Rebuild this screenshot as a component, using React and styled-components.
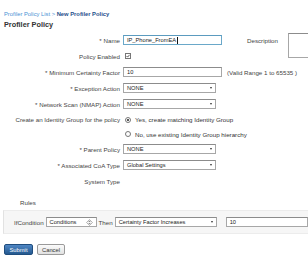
import React from 'react';
import styled, { createGlobalStyle } from 'styled-components';

const GlobalStyle = createGlobalStyle`
  html, body {
    margin: 0;
    padding: 0;
    background: #fff;
    overflow: hidden;
  }
  body {
    font-family: "Liberation Sans", Arial, sans-serif;
    color: #333;
  }
`;

const Page = styled.div`
  width: 308px;
  height: 261px;
  padding: 10px 0 0 4px;
  box-sizing: border-box;
  font-size: 6.2px;
  overflow: hidden;
`;

const Breadcrumb = styled.div`
  font-size: 5.8px;
  line-height: 9px;
  color: #4a8fd4;
`;

const Current = styled.span`
  font-weight: bold;
  color: #1f4f8c;
`;

const Title = styled.div`
  font-size: 7.3px;
  font-weight: bold;
  line-height: 11px;
  color: #333;
`;

const Form = styled.div`
  display: grid;
  grid-template-columns: 116px 1fr;
  grid-template-rows: 16px 16px 16px 16px 16px 15px 14px 16px 16px 16px;
  column-gap: 3px;
  margin-top: 2px;
`;

const Label = styled.div`
  display: flex;
  align-items: center;
  justify-content: flex-end;
  text-align: right;
  white-space: nowrap;
  color: #444;
`;

const Field = styled.div`
  display: flex;
  align-items: center;
  white-space: nowrap;
  position: relative;
`;

const Box = styled.div`
  box-sizing: border-box;
  width: ${p => p.w}px;
  height: 10px;
  display: flex;
  align-items: center;
  padding: 0 3px;
  background: #fff;
  border: 1px solid ${p => (p.focused ? '#6aa8c9' : '#a7a7a7')};
  border-top-color: ${p => (p.focused ? '#5b9bbf' : '#8c8c8c')};
  color: #222;
  font-size: 5.7px;
  white-space: nowrap;
  overflow: hidden;
`;

const Caret = styled.span`
  display: inline-block;
  width: 1px;
  height: 7px;
  background: #111;
  margin-left: 0.5px;
`;

const Arrow = styled.span`
  margin-left: auto;
  width: 0;
  height: 0;
  border-left: 1.5px solid transparent;
  border-right: 1.5px solid transparent;
  border-top: 2px solid #333;
`;

const Aside = styled.span`
  margin-left: ${p => p.gap}px;
  color: #444;
`;

const Description = styled.div`
  position: absolute;
  left: 165px;
  top: 1px;
  width: 40px;
  height: 25px;
  box-sizing: border-box;
  border: 1px solid #a7a7a7;
  border-top-color: #8c8c8c;
  background: #fff;
`;

const Check = styled.span`
  box-sizing: border-box;
  width: 6px;
  height: 6px;
  margin-left: 2px;
  border: 1px solid #777;
  display: flex;
  align-items: center;
  justify-content: center;
  svg { display: block; }
`;

const Radio = styled.span`
  box-sizing: border-box;
  width: 6px;
  height: 6px;
  margin: 0 4px 0 2px;
  border-radius: 50%;
  border: 1px solid #777;
  display: flex;
  align-items: center;
  justify-content: center;
  &::after {
    content: '';
    width: 2px;
    height: 2px;
    border-radius: 50%;
    background: ${p => (p.checked ? '#222' : 'transparent')};
  }
`;

const RulesTitle = styled.div`
  margin: 9px 0 0 16px;
  line-height: 9px;
  color: #444;
`;

const RulesBar = styled.div`
  margin: 3px 0 0 -1px;
  height: 24px;
  box-sizing: border-box;
  display: flex;
  align-items: center;
  gap: 1px;
  padding-left: 9px;
  background: #f6f6f6;
  border-top: 1px solid #ececec;
  border-bottom: 1px solid #ececec;
  border-left: 1px solid #e2e2e2;
  white-space: nowrap;
`;

const RuleText = styled.span`
  color: #444;
  margin: 0 1px;
`;

const Updown = styled.svg`
  margin-left: auto;
  display: block;
`;

const Actions = styled.div`
  display: flex;
  gap: 4px;
  margin-top: 10px;
`;

const Button = styled.div`
  box-sizing: border-box;
  height: 11px;
  width: ${p => p.w}px;
  display: flex;
  align-items: center;
  justify-content: center;
  border-radius: 2px;
  font-size: 5.8px;
`;

const SubmitButton = styled(Button)`
  color: #fff;
  background: linear-gradient(#4f86c4, #24598f);
  border: 1px solid #1f4d7e;
`;

const CancelButton = styled(Button)`
  color: #333;
  background: linear-gradient(#fbfbfb, #e1e1e1);
  border: 1px solid #9a9a9a;
`;

const Select = ({ w, children }) => (
  <Box w={w}>
    {children}
    <Arrow />
  </Box>
);

export default function App() {
  return (
    <>
      <GlobalStyle />
      <Page>
        <Breadcrumb>
          Profiler Policy List &gt; <Current>New Profiler Policy</Current>
        </Breadcrumb>
        <Title>Profiler Policy</Title>
        <Form>
          <Label>* Name</Label>
          <Field>
            <Box w={99} focused>
              IP_Phone_FromEA<Caret />
            </Box>
            <Aside gap={25}>Description</Aside>
            <Description />
          </Field>

          <Label>Policy Enabled</Label>
          <Field>
            <Check>
              <svg width="4" height="4" viewBox="0 0 4 4">
                <path d="M0.5 2 L1.6 3.1 L3.6 0.8" fill="none" stroke="#333" strokeWidth="0.8" />
              </svg>
            </Check>
          </Field>

          <Label>* Minimum Certainty Factor</Label>
          <Field>
            <Box w={99}>10</Box>
            <Aside gap={5}>(Valid Range 1 to 65535 )</Aside>
          </Field>

          <Label>* Exception Action</Label>
          <Field>
            <Select w={93}>NONE</Select>
          </Field>

          <Label>* Network Scan (NMAP) Action</Label>
          <Field>
            <Select w={93}>NONE</Select>
          </Field>

          <Label>Create an Identity Group for the policy</Label>
          <Field>
            <Radio checked />
            Yes, create matching Identity Group
          </Field>

          <Label />
          <Field>
            <Radio />
            No, use existing Identity Group hierarchy
          </Field>

          <Label>* Parent Policy</Label>
          <Field>
            <Select w={93}>NONE</Select>
          </Field>

          <Label>* Associated CoA Type</Label>
          <Field>
            <Select w={93}>Global Settings</Select>
          </Field>

          <Label>System Type</Label>
          <Field />
        </Form>

        <RulesTitle>Rules</RulesTitle>
        <RulesBar>
          <RuleText>IfCondition</RuleText>
          <Box w={51}>
            Conditions
            <Updown width="7" height="7" viewBox="0 0 7 7">
              <path d="M3.5 0.5 L6.5 3.5 L3.5 6.5 L0.5 3.5 Z" fill="#f4f4f4" stroke="#9a9a9a" strokeWidth="0.7" />
              <path d="M3.5 1.6 L4.7 3 L2.3 3 Z M3.5 5.4 L4.7 4 L2.3 4 Z" fill="#8a8a8a" />
            </Updown>
          </Box>
          <RuleText>Then</RuleText>
          <Select w={102}>Certainty Factor Increases</Select>
          <Box w={82} style={{ marginLeft: 8 }}>10</Box>
        </RulesBar>

        <Actions>
          <SubmitButton w={29}>Submit</SubmitButton>
          <CancelButton w={28}>Cancel</CancelButton>
        </Actions>
      </Page>
    </>
  );
}
